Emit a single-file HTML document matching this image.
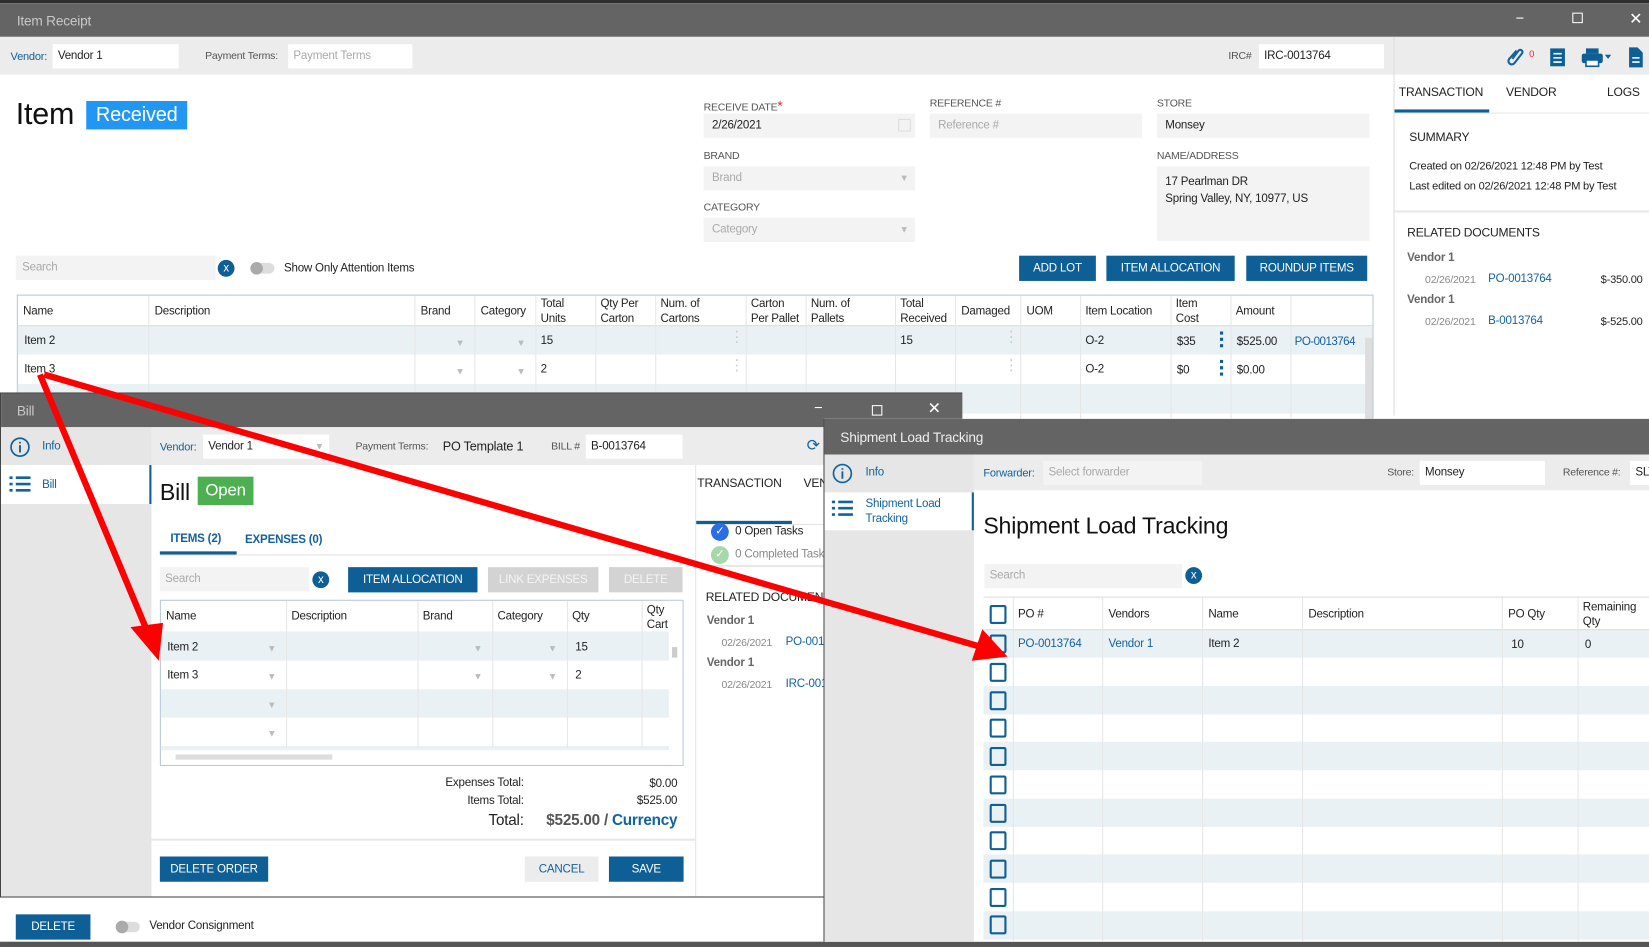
<!DOCTYPE html>
<html><head><meta charset="utf-8"><style>
*{box-sizing:border-box;margin:0;padding:0}
html,body{width:1649px;height:947px;overflow:hidden;background:#fff}
#s{position:absolute;left:0;top:0;width:1568px;height:900px;transform:scale(1.0517,1.0522);transform-origin:0 0;font-family:"Liberation Sans",sans-serif;font-size:11px;color:#222;background:#fff;overflow:hidden;white-space:nowrap;letter-spacing:-0.2px}
.a{position:absolute}
.tb{background:#646464;color:#d0d0d0;font-size:13px}
.band{background:#ececec}
.lbl{color:#555;font-size:10px}
.blu{color:#1262a0}
.in{position:absolute;background:#fff;height:23px;line-height:23px;padding-left:5px;font-size:11px}
.gi{position:absolute;background:#f3f3f3;height:23px;line-height:23px;padding-left:8px;font-size:11px;color:#222}
.ph{color:#aaa}
.cap{color:#555;font-size:10px;text-transform:uppercase}
.btn{position:absolute;background:#0d5f96;color:#fff;font-size:11px;text-align:center;height:24px;line-height:24px}
.gb{position:absolute;background:#d3d3d3;color:#f4f4f4;font-size:11px;text-align:center;height:24px;line-height:24px}
.xc{position:absolute;width:16px;height:16px;border-radius:50%;background:#0d5f96;color:#fff;font-size:11px;line-height:16px;text-align:center}
.tg{position:absolute;width:22px;height:10px;border-radius:5px;background:#ddd}
.tg:before{content:"";position:absolute;left:-1px;top:-1px;width:12px;height:12px;border-radius:50%;background:#aaa}
.row{position:absolute;left:0;right:0}
.vl{position:absolute;top:0;bottom:0;width:1px;background:#e6e6e6}
.arr{position:absolute;color:#bbb;font-size:9px}
.cb{position:absolute;width:16px;height:18px;border:2px solid #0d5f96;border-radius:2px}
</style></head><body><div id="s">

<div class="a" style="left:0;top:0;width:1568px;height:3px;background:#2e2e2e"></div>
<div class="a tb" style="left:0;top:3px;width:1568px;height:32px"><span class="a" style="left:16px;top:9px;color:#c8c8c8">Item Receipt</span>
<span class="a" style="left:1441px;top:6px;color:#fff;font-size:14px">−</span>
<span class="a" style="left:1495px;top:9px;width:10px;height:10px;border:1px solid #fff"></span>
<span class="a" style="left:1549px;top:6px;color:#fff;font-size:15px">✕</span></div>
<div class="a band" style="left:0;top:35px;width:1568px;height:36px"></div>
<div class="a" style="left:1325px;top:35px;width:1px;height:360px;background:#ddd"></div>
<span class="a blu" style="left:10px;top:48px;font-size:10.5px">Vendor:</span>
<div class="in" style="left:50px;top:42px;width:120px">Vendor 1</div>
<span class="a lbl" style="left:195px;top:48px">Payment Terms:</span>
<div class="in ph" style="left:274px;top:42px;width:118px">Payment Terms</div>
<span class="a lbl" style="left:1168px;top:48px">IRC#</span>
<div class="in" style="left:1197px;top:42px;width:119px">IRC-0013764</div>
<svg class="a" style="left:1430px;top:42px" width="135" height="24">
<path d="M12 6 L5 14 a3 3 0 0 0 5 4 L17 9 a2 2 0 0 0 -3 -3 L8 14" fill="none" stroke="#1262a0" stroke-width="2"/>
<text x="24" y="12" fill="#e22" font-size="9" font-family="Liberation Sans">0</text>
<rect x="44" y="4" width="14" height="17" fill="#0d5f96"/><path d="M47 9h8M47 13h8M47 17h8" stroke="#fff" stroke-width="1.5"/>
<rect x="74" y="9" width="20" height="9" rx="2" fill="#0d5f96"/><rect x="78" y="4" width="12" height="5" fill="#0d5f96"/><rect x="78" y="15" width="12" height="6" fill="#fff" stroke="#0d5f96" stroke-width="1.5"/>
<path d="M96 10h6l-3 4z" fill="#0d5f96"/>
<path d="M119 3h8l5 5v14h-13z" fill="#0d5f96"/><path d="M122 13h7M122 17h7" stroke="#fff" stroke-width="1.5"/>
</svg>

<span class="a" style="left:15px;top:93px;font-size:29px;color:#111">Item</span>
<div class="a" style="left:82px;top:96px;width:96px;height:27px;background:#2196f3;color:#fff;font-size:19px;line-height:27px;text-align:center">Received</div>

<span class="a cap" style="left:669px;top:93px">Receive Date<span style="color:#e22;font-size:13px">*</span></span>
<div class="gi" style="left:669px;top:108px;width:201px">2/26/2021<span class="a" style="right:4px;top:5px;width:12px;height:12px;border:1px solid #ddd"></span></div>
<span class="a cap" style="left:884px;top:93px">Reference #</span>
<div class="gi ph" style="left:884px;top:108px;width:202px">Reference #</div>
<span class="a cap" style="left:1100px;top:93px">Store</span>
<div class="gi" style="left:1100px;top:108px;width:202px">Monsey</div>
<span class="a cap" style="left:669px;top:143px">Brand</span>
<div class="gi ph" style="left:669px;top:158px;width:201px">Brand<span class="a" style="right:6px;top:0;color:#bbb;font-size:9px">▼</span></div>
<span class="a cap" style="left:1100px;top:143px">Name/Address</span>
<div class="gi" style="left:1100px;top:158px;width:202px;height:71px;line-height:16px;padding-top:7px">17 Pearlman DR<br>Spring Valley, NY, 10977, US</div>
<span class="a cap" style="left:669px;top:192px">Category</span>
<div class="gi ph" style="left:669px;top:207px;width:201px">Category<span class="a" style="right:6px;top:0;color:#bbb;font-size:9px">▼</span></div>

<div class="gi ph" style="left:15px;top:243px;width:190px;padding-left:6px">Search</div>
<div class="xc" style="left:207px;top:247px">x</div>
<div class="tg" style="left:239px;top:250px"></div>
<span class="a" style="left:270px;top:249px">Show Only Attention Items</span>
<div class="btn" style="left:969px;top:243px;width:73px">ADD LOT</div>
<div class="btn" style="left:1052px;top:243px;width:122px">ITEM ALLOCATION</div>
<div class="btn" style="left:1185px;top:243px;width:115px">ROUNDUP ITEMS</div>

<div class="a" style="left:16px;top:280px;width:1290px;height:120px;border-top:1px solid #b8c8d8;border-left:1px solid #b8c8d8;border-right:1px solid #b8c8d8">
<div class="row" style="top:28px;height:28px;background:#eaf1f5;border-top:1px solid #ddd"></div>
<div class="row" style="top:84px;height:28px;background:#eaf1f5"></div>
<div class="vl" style="left:124px"></div><div class="vl" style="left:377px"></div><div class="vl" style="left:434px"></div><div class="vl" style="left:492px"></div><div class="vl" style="left:549px"></div><div class="vl" style="left:606px"></div><div class="vl" style="left:692px"></div><div class="vl" style="left:749px"></div><div class="vl" style="left:834px"></div><div class="vl" style="left:891px"></div><div class="vl" style="left:953px"></div><div class="vl" style="left:1010px"></div><div class="vl" style="left:1096px"></div><div class="vl" style="left:1153px"></div><div class="vl" style="left:1210px"></div>
<div class="a" style="left:1281px;top:40px;width:7px;height:80px;background:#ddd"></div>
<div class="a" style="top:0;left:0;width:1280px;line-height:14px">
<span class="a" style="left:5px;top:8px">Name</span><span class="a" style="left:130px;top:8px">Description</span><span class="a" style="left:383px;top:8px">Brand</span><span class="a" style="left:440px;top:8px">Category</span><span class="a" style="left:497px;top:1px">Total<br>Units</span><span class="a" style="left:554px;top:1px">Qty Per<br>Carton</span><span class="a" style="left:611px;top:1px">Num. of<br>Cartons</span><span class="a" style="left:697px;top:1px">Carton<br>Per Pallet</span><span class="a" style="left:754px;top:1px">Num. of<br>Pallets</span><span class="a" style="left:839px;top:1px">Total<br>Received</span><span class="a" style="left:897px;top:8px">Damaged</span><span class="a" style="left:959px;top:8px">UOM</span><span class="a" style="left:1015px;top:8px">Item Location</span><span class="a" style="left:1101px;top:1px">Item<br>Cost</span><span class="a" style="left:1158px;top:8px">Amount</span>
<span class="a" style="left:6px;top:36px">Item 2</span><span class="arr" style="left:416px;top:38px">▼</span><span class="arr" style="left:474px;top:38px">▼</span><span class="a" style="left:497px;top:36px">15</span><span class="a" style="left:682px;top:33px;color:#ccc;font-weight:bold;line-height:5px">·<br>·<br>·</span><span class="a" style="left:839px;top:36px">15</span><span class="a" style="left:943px;top:33px;color:#ccc;font-weight:bold;line-height:5px">·<br>·<br>·</span><span class="a" style="left:1015px;top:36px">O-2</span><span class="a" style="left:1102px;top:37px">$35</span><span class="a" style="left:1143px;top:34px;width:3px;height:15px;border-left:3px dotted #0d5f96"></span><span class="a" style="left:1159px;top:37px">$525.00</span><span class="a blu" style="left:1214px;top:37px;letter-spacing:-0.5px">PO-0013764</span>
<span class="a" style="left:6px;top:63px">Item 3</span><span class="arr" style="left:416px;top:65px">▼</span><span class="arr" style="left:474px;top:65px">▼</span><span class="a" style="left:497px;top:63px">2</span><span class="a" style="left:682px;top:60px;color:#ccc;font-weight:bold;line-height:5px">·<br>·<br>·</span><span class="a" style="left:943px;top:60px;color:#ccc;font-weight:bold;line-height:5px">·<br>·<br>·</span><span class="a" style="left:1015px;top:63px">O-2</span><span class="a" style="left:1102px;top:64px">$0</span><span class="a" style="left:1143px;top:61px;width:3px;height:15px;border-left:3px dotted #0d5f96"></span><span class="a" style="left:1159px;top:64px">$0.00</span>
</div></div>

<span class="a" style="left:1330px;top:82px;font-size:11.5px">TRANSACTION</span>
<span class="a" style="left:1432px;top:82px;font-size:11.5px">VENDOR</span>
<span class="a" style="left:1528px;top:82px;font-size:11.5px">LOGS</span>
<div class="a" style="left:1326px;top:104px;width:90px;height:3px;background:#0d5f96"></div>
<div class="a" style="left:1326px;top:107px;width:242px;height:1px;background:#e4e4e4"></div>
<span class="a" style="left:1340px;top:125px;font-size:11.5px">SUMMARY</span>
<span class="a" style="left:1340px;top:152px;font-size:10.5px">Created on 02/26/2021 12:48 PM by Test</span>
<span class="a" style="left:1340px;top:171px;font-size:10.5px">Last edited on 02/26/2021 12:48 PM by Test</span>
<div class="a" style="left:1326px;top:200px;width:242px;height:2px;background:#e8e8e8"></div>
<span class="a" style="left:1338px;top:216px;font-size:11.5px">RELATED DOCUMENTS</span>
<span class="a" style="left:1338px;top:239px;font-size:11px;color:#666;font-weight:bold">Vendor 1</span>
<span class="a" style="left:1355px;top:261px;font-size:10px;color:#888">02/26/2021</span><span class="a blu" style="left:1415px;top:259px">PO-0013764</span><span class="a" style="left:1522px;top:260px;font-size:10.5px">$-350.00</span>
<span class="a" style="left:1338px;top:279px;font-size:11px;color:#666;font-weight:bold">Vendor 1</span>
<span class="a" style="left:1355px;top:301px;font-size:10px;color:#888">02/26/2021</span><span class="a blu" style="left:1415px;top:299px">B-0013764</span><span class="a" style="left:1522px;top:300px;font-size:10.5px">$-525.00</span>

<div class="btn" style="left:15px;top:869px;width:71px">DELETE</div>
<div class="tg" style="left:111px;top:876px"></div>
<span class="a" style="left:142px;top:874px">Vendor Consignment</span>
<div class="a" style="left:0;top:895px;width:1568px;height:5px;background:#555"></div>

<div class="a" style="left:0;top:373px;width:915px;height:480px;border:1px solid #444;background:#fff;overflow:hidden">
<div class="a tb" style="left:0;top:0;width:915px;height:32px"><span class="a" style="left:15px;top:9px;color:#c8c8c8">Bill</span>
<span class="a" style="left:773px;top:5px;color:#fff;font-size:14px">−</span><span class="a" style="left:828px;top:11px;width:10px;height:10px;border:1px solid #fff"></span><span class="a" style="left:881px;top:5px;color:#fff;font-size:15px">✕</span></div>
<div class="a" style="left:0;top:32px;width:143px;height:448px;background:#e6e6e6"></div>
<div class="a" style="left:0;top:68px;width:143px;height:37px;background:#fff;border-right:2px solid #0d5f96"></div>
<svg class="a" style="left:7px;top:41px" width="22" height="56"><circle cx="11" cy="10" r="8.5" fill="none" stroke="#1262a0" stroke-width="1.6"/><path d="M11 8v7M11 5v1.5" stroke="#1262a0" stroke-width="1.8"/><path d="M1 39h3M7 39h14M1 45h3M7 45h14M1 51h3M7 51h14" stroke="#1262a0" stroke-width="2.5"/></svg>
<span class="a blu" style="left:39px;top:44px">Info</span><span class="a blu" style="left:39px;top:81px">Bill</span>
<div class="a band" style="left:143px;top:32px;width:772px;height:36px"></div>
<span class="a blu" style="left:151px;top:45px;font-size:10.5px">Vendor:</span>
<div class="in" style="left:192px;top:39px;width:120px">Vendor 1<span class="a" style="right:5px;top:0;color:#bbb;font-size:9px">▼</span></div>
<span class="a lbl" style="left:337px;top:45px">Payment Terms:</span>
<span class="a" style="left:420px;top:43px;font-size:12px">PO Template 1</span>
<span class="a lbl" style="left:523px;top:45px">BILL #</span>
<div class="in" style="left:556px;top:39px;width:92px">B-0013764</div>
<span class="a blu" style="left:766px;top:40px;font-size:15px">⟳</span>
<span class="a" style="left:151px;top:81px;font-size:22px;color:#111">Bill</span>
<div class="a" style="left:187px;top:79px;width:53px;height:27px;background:#4caf50;color:#fff;font-size:16px;line-height:27px;text-align:center">Open</div>
<span class="a blu" style="left:161px;top:132px;font-weight:bold;font-size:11px">ITEMS (2)</span>
<span class="a blu" style="left:232px;top:133px;font-weight:bold;font-size:11px">EXPENSES (0)</span>
<div class="a" style="left:151px;top:153px;width:497px;height:1px;background:#e0e0e0"></div>
<div class="a" style="left:151px;top:150px;width:73px;height:3px;background:#0d5f96"></div>
<div class="gi ph" style="left:151px;top:165px;width:142px;padding-left:5px">Search</div>
<div class="xc" style="left:296px;top:169px">x</div>
<div class="btn" style="left:330px;top:165px;width:123px">ITEM ALLOCATION</div>
<div class="gb" style="left:463px;top:165px;width:105px">LINK EXPENSES</div>
<div class="gb" style="left:578px;top:165px;width:70px">DELETE</div>
<div class="a" style="left:151px;top:196px;width:498px;height:158px;border:1px solid #b8c8d8;overflow:hidden">
<div class="row" style="top:29px;height:28px;background:#eaf1f5"></div><div class="row" style="top:84px;height:27px;background:#eaf1f5"></div><div class="row" style="top:138px;height:4px;background:#eaf1f5"></div>
<div class="vl" style="left:119px;height:140px"></div><div class="vl" style="left:244px;height:140px"></div><div class="vl" style="left:315px;height:140px"></div><div class="vl" style="left:386px;height:140px"></div><div class="vl" style="left:457px;height:140px"></div>
<div class="a" style="left:483px;top:0;width:14px;height:156px;background:#fff"></div>
<div class="a" style="left:486px;top:44px;width:5px;height:10px;background:#ccc"></div>
<div class="a" style="left:14px;top:146px;width:149px;height:5px;background:#ddd"></div>
<span class="a" style="left:5px;top:9px">Name</span><span class="a" style="left:124px;top:9px">Description</span><span class="a" style="left:249px;top:9px">Brand</span><span class="a" style="left:320px;top:9px">Category</span><span class="a" style="left:391px;top:9px">Qty</span><span class="a" style="left:462px;top:2px;line-height:14px">Qty<br>Cart</span>
<span class="a" style="left:6px;top:38px">Item 2</span><span class="arr" style="left:101px;top:40px">▼</span><span class="arr" style="left:297px;top:40px">▼</span><span class="arr" style="left:368px;top:40px">▼</span><span class="a" style="left:394px;top:38px">15</span>
<span class="a" style="left:6px;top:65px">Item 3</span><span class="arr" style="left:101px;top:67px">▼</span><span class="arr" style="left:297px;top:67px">▼</span><span class="arr" style="left:368px;top:67px">▼</span><span class="a" style="left:394px;top:65px">2</span>
<span class="arr" style="left:101px;top:94px">▼</span><span class="arr" style="left:101px;top:121px">▼</span>
</div>
<span class="a" style="left:380px;top:364px;width:117px;text-align:right">Expenses Total:</span><span class="a" style="left:560px;top:365px;width:83px;text-align:right">$0.00</span>
<span class="a" style="left:380px;top:381px;width:117px;text-align:right">Items Total:</span><span class="a" style="left:560px;top:381px;width:83px;text-align:right">$525.00</span>
<span class="a" style="left:440px;top:398px;width:57px;text-align:right;font-size:14.5px">Total:</span>
<span class="a" style="left:500px;top:398px;width:143px;text-align:right;font-size:14.5px;font-weight:bold;color:#555">$525.00 / <span class="blu">Currency</span></span>
<div class="a" style="left:143px;top:423px;width:517px;height:2px;background:#e8e8e8"></div>
<div class="btn" style="left:151px;top:440px;width:103px">DELETE ORDER</div>
<div class="a blu" style="left:498px;top:440px;width:70px;height:24px;line-height:24px;text-align:center;background:#ececec">CANCEL</div>
<div class="btn" style="left:578px;top:440px;width:71px">SAVE</div>
<div class="a" style="left:660px;top:68px;width:1px;height:412px;background:#e4e4e4"></div>
<span class="a" style="left:662px;top:80px;font-size:11.5px">TRANSACTION</span><span class="a" style="left:763px;top:80px;font-size:11.5px">VENDOR</span>
<div class="a" style="left:661px;top:121px;width:91px;height:3px;background:#0d5f96"></div>
<div class="a" style="left:661px;top:124px;width:260px;height:1px;background:#e4e4e4"></div>
<div class="a" style="left:675px;top:123px;width:17px;height:17px;border-radius:50%;background:#2a6ee6;color:#fff;font-size:11px;text-align:center;line-height:17px">✓</div>
<span class="a" style="left:698px;top:125px">0 Open Tasks</span>
<div class="a" style="left:675px;top:145px;width:17px;height:17px;border-radius:50%;background:#a7d8a9;color:#fff;font-size:11px;text-align:center;line-height:17px">✓</div>
<span class="a" style="left:698px;top:147px;color:#888">0 Completed Tasks</span>
<div class="a" style="left:661px;top:163px;width:260px;height:2px;background:#e8e8e8"></div>
<span class="a" style="left:670px;top:188px;font-size:11.5px">RELATED DOCUMENTS</span>
<span class="a" style="left:671px;top:210px;color:#666;font-weight:bold">Vendor 1</span>
<span class="a" style="left:685px;top:232px;font-size:10px;color:#888">02/26/2021</span><span class="a blu" style="left:746px;top:230px">PO-0013764</span>
<span class="a" style="left:671px;top:250px;color:#666;font-weight:bold">Vendor 1</span>
<span class="a" style="left:685px;top:272px;font-size:10px;color:#888">02/26/2021</span><span class="a blu" style="left:746px;top:270px">IRC-0013764</span>
</div>

<div class="a" style="left:783px;top:398px;width:785px;height:497px;border-left:1px solid #444;background:#fff;overflow:hidden">
<div class="a tb" style="left:0;top:0;width:785px;height:34px"><span class="a" style="left:15px;top:10px;color:#eee">Shipment Load Tracking</span></div>
<div class="a" style="left:0;top:34px;width:142px;height:463px;background:#e6e6e6"></div>
<div class="a" style="left:0;top:70px;width:142px;height:36px;background:#fff;border-right:2px solid #0d5f96"></div>
<svg class="a" style="left:6px;top:42px" width="22" height="56"><circle cx="11" cy="10" r="8.5" fill="none" stroke="#1262a0" stroke-width="1.6"/><path d="M11 8v7M11 5v1.5" stroke="#1262a0" stroke-width="1.8"/><path d="M1 37h3M7 37h14M1 43h3M7 43h14M1 49h3M7 49h14" stroke="#1262a0" stroke-width="2.5"/></svg>
<span class="a blu" style="left:39px;top:45px">Info</span>
<span class="a blu" style="left:39px;top:74px;line-height:14px">Shipment Load<br>Tracking</span>
<div class="a band" style="left:142px;top:34px;width:643px;height:34px"></div>
<span class="a blu" style="left:151px;top:46px;font-size:10.5px">Forwarder:</span>
<div class="gi ph" style="left:208px;top:40px;width:151px;padding-left:5px">Select forwarder</div>
<span class="a lbl" style="left:535px;top:46px">Store:</span>
<div class="in" style="left:566px;top:40px;width:119px">Monsey</div>
<span class="a lbl" style="left:702px;top:46px">Reference #:</span>
<div class="in" style="left:766px;top:40px;width:30px">SLT</div>
<span class="a" style="left:151px;top:89px;font-size:22px;color:#111">Shipment Load Tracking</span>
<div class="gi ph" style="left:152px;top:138px;width:188px;padding-left:5px">Search</div>
<div class="xc" style="left:343px;top:141px">x</div>
<div class="a" style="left:151px;top:169px;width:640px;height:330px;border-top:1px solid #ddd">
<div class="row" style="top:30px;height:27px;background:#eaf1f5;border-top:1px solid #ddd"></div>
<div class="row" style="top:84px;height:27px;background:#eaf1f5"></div><div class="row" style="top:137px;height:27px;background:#eaf1f5"></div><div class="row" style="top:191px;height:27px;background:#eaf1f5"></div><div class="row" style="top:244px;height:27px;background:#eaf1f5"></div><div class="row" style="top:298px;height:27px;background:#eaf1f5"></div>
<div class="vl" style="left:28px"></div><div class="vl" style="left:113px"></div><div class="vl" style="left:208px"></div><div class="vl" style="left:303px"></div><div class="vl" style="left:493px"></div><div class="vl" style="left:565px"></div>
<div class="cb" style="left:6px;top:7px"></div>
<div class="cb" style="left:6px;top:35px"></div><div class="cb" style="left:6px;top:62px"></div><div class="cb" style="left:6px;top:89px"></div><div class="cb" style="left:6px;top:115px"></div><div class="cb" style="left:6px;top:142px"></div><div class="cb" style="left:6px;top:169px"></div><div class="cb" style="left:6px;top:196px"></div><div class="cb" style="left:6px;top:222px"></div><div class="cb" style="left:6px;top:249px"></div><div class="cb" style="left:6px;top:276px"></div><div class="cb" style="left:6px;top:302px"></div>
<span class="a" style="left:33px;top:10px">PO #</span><span class="a" style="left:119px;top:10px">Vendors</span><span class="a" style="left:214px;top:10px">Name</span><span class="a" style="left:309px;top:10px">Description</span><span class="a" style="left:499px;top:10px">PO Qty</span><span class="a" style="left:570px;top:2px;line-height:14px">Remaining<br>Qty</span>
<span class="a blu" style="left:33px;top:38px">PO-0013764</span><span class="a blu" style="left:119px;top:38px">Vendor 1</span><span class="a" style="left:214px;top:38px">Item 2</span><span class="a" style="left:502px;top:39px">10</span><span class="a" style="left:572px;top:39px">0</span>
</div>
</div>

<svg class="a" style="left:0;top:0" width="1568" height="900">
<path d="M38 356 L140 600" stroke="#f00" stroke-width="6" fill="none"/>
<polygon points="151,628 124,596 155,592" fill="#f00"/>
<path d="M42 356 L930 614" stroke="#f00" stroke-width="6" fill="none"/>
<polygon points="958,624 924,628 934,598" fill="#f00"/>
</svg>
</div></body></html>
